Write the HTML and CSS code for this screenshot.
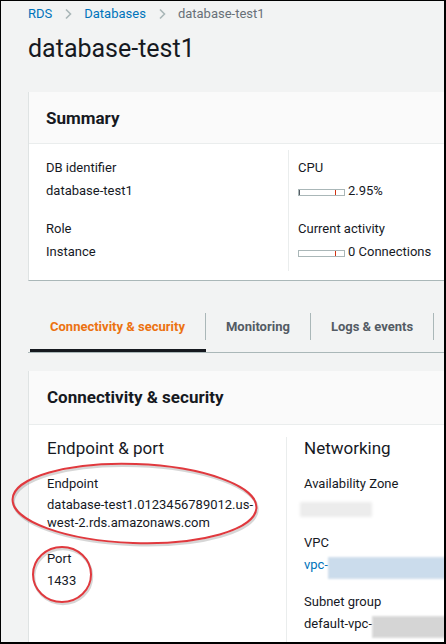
FILE: index.html
```html
<!DOCTYPE html>
<html lang="en">
<head>
<meta charset="utf-8">
<title>database-test1</title>
<link rel="stylesheet" href="styles.css">
</head>
<body>
<div class="frame">
  <div class="page">
    <nav class="crumbs">
      <a class="crumb-link">RDS</a>
      <svg class="chev" width="9" height="12" viewBox="0 0 9 12"><path d="M2 1.5 L6.5 6 L2 10.5" fill="none" stroke="#aab7b8" stroke-width="1.6"/></svg>
      <a class="crumb-link">Databases</a>
      <svg class="chev" width="9" height="12" viewBox="0 0 9 12"><path d="M2 1.5 L6.5 6 L2 10.5" fill="none" stroke="#aab7b8" stroke-width="1.6"/></svg>
      <span class="crumb-current">database-test1</span>
    </nav>
    <h1 class="title">database-test1</h1>

    <section class="card card-summary">
      <div class="card-head"><h2>Summary</h2></div>
      <div class="card-body summary-body">
        <div class="col col-left">
          <div class="kv">
            <div class="k">DB identifier</div>
            <div class="v">database-test1</div>
          </div>
          <div class="kv">
            <div class="k">Role</div>
            <div class="v">Instance</div>
          </div>
        </div>
        <div class="col col-right">
          <div class="kv">
            <div class="k">CPU</div>
            <div class="v"><span class="meter"><span class="fill"></span><span class="mark"></span></span><span class="meter-text">2.95%</span></div>
          </div>
          <div class="kv">
            <div class="k">Current activity</div>
            <div class="v"><span class="meter"><span class="mark"></span></span><span class="meter-text">0 Connections</span></div>
          </div>
        </div>
      </div>
    </section>

    <div class="tabs">
      <div class="tab active"><span class="tab-label">Connectivity &amp; security</span></div>
      <div class="tab"><span class="tab-label">Monitoring</span></div>
      <div class="tab"><span class="tab-label">Logs &amp; events</span></div>
    </div>

    <section class="card card-conn">
      <div class="card-head"><h2>Connectivity &amp; security</h2></div>
      <div class="card-body conn-body">
        <div class="col col-left2">
          <h3 class="sub">Endpoint &amp; port</h3>
          <div class="kv2">
            <div class="k">Endpoint</div>
            <div class="v v-wrap">database-test1.0123456789012.us-west-2.rds.amazonaws.com</div>
          </div>
          <div class="kv2">
            <div class="k">Port</div>
            <div class="v">1433</div>
          </div>
        </div>
        <div class="col col-right2">
          <h3 class="sub">Networking</h3>
          <div class="kv2">
            <div class="k">Availability Zone</div>
            <div class="v"><span class="blur blur-az"></span></div>
          </div>
          <div class="kv2">
            <div class="k">VPC</div>
            <div class="v"><a class="link">vpc-</a><span class="blur blur-blue"></span></div>
          </div>
          <div class="kv2">
            <div class="k">Subnet group</div>
            <div class="v">default-vpc-<span class="blur blur-gray"></span></div>
          </div>
        </div>
      </div>
    </section>
  </div>
</div>
<svg class="annot" width="446" height="644" viewBox="0 0 446 644">
  <g fill="none" stroke-width="2.5" stroke="rgba(0,0,0,0.16)">
    <ellipse cx="135.5" cy="505.5" rx="122" ry="39.5" transform="rotate(2 135.5 505.5)"/>
    <ellipse cx="63" cy="576.5" rx="29" ry="27.5"/>
  </g>
  <g fill="none" stroke-width="2" stroke="#e0393e">
    <ellipse cx="134.5" cy="503.5" rx="122" ry="39.5" transform="rotate(2 134.5 503.5)"/>
    <ellipse cx="62" cy="574.5" rx="29" ry="27.5"/>
  </g>
  <g fill="#000">
    <rect x="0" y="0" width="446" height="1"/>
    <rect x="0" y="0" width="1" height="644"/>
    <rect x="444" y="0" width="2" height="644"/>
    <rect x="0" y="642" width="446" height="2"/>
  </g>
</svg>
</body>
</html>
```
FILE: styles.css
```css
html, body {
  margin: 0;
  padding: 0;
  overflow: hidden;
}
body {
  position: relative;
  width: 446px;
  height: 644px;
  font-family: Roboto, "Noto Sans", "Liberation Sans", sans-serif;
  color: #16191f;
  font-size: 13px;
  background: #f2f3f3;
}
.frame {
  width: 446px;
  height: 644px;
  background: #f2f3f3;
  overflow: hidden;
}
.page {
  width: 600px;
  padding: 4px 0 0 28px;
}
.crumbs {
  display: flex;
  align-items: center;
  height: 20px;
  line-height: 20px;
  font-size: 13px;
}
.crumb-link {
  color: #0073bb;
}
.chev {
  margin: 0 11px 0 12px;
}
.crumb-current {
  color: #687078;
}
.title {
  margin: 9px 0 0;
  font-size: 25px;
  line-height: 32px;
  font-weight: 400;
  color: #16191f;
}
.card {
  background: #fff;
  border-left: 1px solid #dfe3e3;
  border-bottom: 1px solid #aab7b8;
}
.card-summary {
  margin-top: 27px;
}
.card-head {
  background: #fafafa;
  border-bottom: 1px solid #eaeded;
}
.card-head h2 {
  margin: 0;
  font-size: 17px;
  line-height: 22px;
  font-weight: 700;
}
.card-summary .card-head {
  padding: 15px 18px 14px 17px;
}
.card-conn .card-head {
  padding: 15px 19px 16px 18px;
}
.summary-body {
  display: grid;
  grid-template-columns: 259px 1fr;
  padding: 6px 0 9px;
}
.col-left {
  padding: 8px 18px 9px 17px;
}
.col-right {
  border-left: 1px solid #eaeded;
  padding: 8px 9px 9px;
}
.k, .v {
  line-height: 20px;
  font-size: 13px;
}
.kv .v {
  margin-top: 3px;
}
.kv + .kv {
  margin-top: 18px;
}
.meter {
  position: relative;
  display: inline-block;
  box-sizing: border-box;
  width: 47px;
  height: 7px;
  border: 1px solid #aab7b8;
  background: #fff;
  vertical-align: -1px;
}
.meter .fill {
  position: absolute;
  left: 0;
  top: 0;
  width: 1px;
  height: 5px;
  background: #545b64;
}
.meter .mark {
  position: absolute;
  left: 36px;
  top: 0;
  width: 1px;
  height: 5px;
  background: #d13212;
}
.meter-text {
  margin-left: 3px;
}
.tabs {
  display: flex;
  margin-top: 24px;
  padding-left: 2px;
  border-bottom: 1px solid #aab7b8;
}
.tab {
  padding-top: 8px;
  padding-bottom: 9px;
  border-bottom: 3px solid transparent;
}
.tab.active {
  border-bottom-color: #16191f;
}
.tab-label {
  display: inline-block;
  padding: 4px 20px;
  line-height: 19px;
  font-size: 13px;
  font-weight: 700;
  color: #545b64;
  border-right: 1px solid #aab7b8;
  vertical-align: top;
}
.tab.active .tab-label {
  color: #ec7211;
}
.card-conn {
  margin-top: 18px;
  height: 280px;
}
.conn-body {
  display: grid;
  grid-template-columns: 257px 1fr;
  padding-top: 12px;
}
.col-left2 {
  padding: 0 14px 0 18px;
}
.col-right2 {
  border-left: 1px solid #eaeded;
  padding: 0 0 0 17px;
  height: 230px;
}
.sub {
  margin: 0 0 15px;
  font-size: 17px;
  line-height: 22px;
  font-weight: 400;
}
.kv2 .v {
  margin-top: 2px;
}
.kv2 + .kv2 {
  margin-top: 17px;
}
.v-wrap {
  line-height: 18px;
}
.link {
  color: #0073bb;
}
.blur {
  display: inline-block;
  vertical-align: -4px;
}
.blur-az {
  width: 66px;
  height: 9px;
  margin-left: -1px;
  background: #ececec;
  box-shadow: 0 0 3px 3px #ececec;
}
.blur-blue {
  width: 220px;
  height: 18px;
  margin: -4px 0 -4px 2px;
  background: #cbdcec;
  box-shadow: 0 0 2px 2px #cfdeec;
}
.blur-gray {
  width: 200px;
  height: 18px;
  margin: -4px 0 -4px 2px;
  background: #d5d5d5;
  box-shadow: 0 0 2px 2px #d9d9d9;
}
.annot {
  position: absolute;
  left: 0;
  top: 0;
  pointer-events: none;
}
```
